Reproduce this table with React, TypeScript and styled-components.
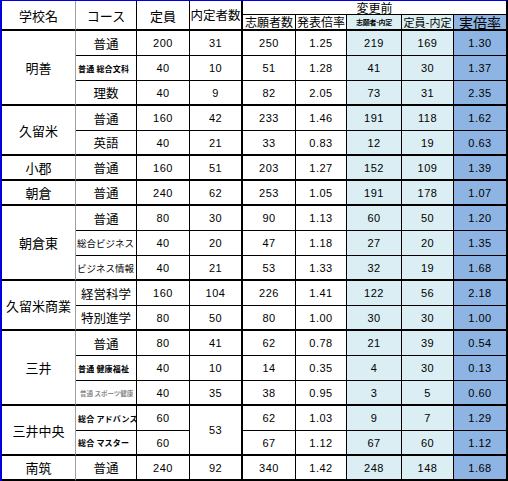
import React, { Fragment } from "react";
import styled, { createGlobalStyle, css } from "styled-components";

type Tone = "plain" | "light" | "blue";
type Edge = "gray" | "thin" | "thick" | "none";
type Kind = "normal" | "small" | "mid" | "faint";

interface Course {
  name: string;
  kind?: Kind;
  cap: number;
  offer?: number;
  offerSpan?: number;
  apply: number;
  rate: string;
  diff: number;
  left: number;
  real: string;
}

interface School {
  name: string;
  rows: Course[];
}

const schools: School[] = [
  {
    name: "明善",
    rows: [
      { name: "普通", cap: 200, offer: 31, apply: 250, rate: "1.25", diff: 219, left: 169, real: "1.30" },
      { name: "普通 総合文科", kind: "small", cap: 40, offer: 10, apply: 51, rate: "1.28", diff: 41, left: 30, real: "1.37" },
      { name: "理数", cap: 40, offer: 9, apply: 82, rate: "2.05", diff: 73, left: 31, real: "2.35" },
    ],
  },
  {
    name: "久留米",
    rows: [
      { name: "普通", cap: 160, offer: 42, apply: 233, rate: "1.46", diff: 191, left: 118, real: "1.62" },
      { name: "英語", cap: 40, offer: 21, apply: 33, rate: "0.83", diff: 12, left: 19, real: "0.63" },
    ],
  },
  {
    name: "小郡",
    rows: [{ name: "普通", cap: 160, offer: 51, apply: 203, rate: "1.27", diff: 152, left: 109, real: "1.39" }],
  },
  {
    name: "朝倉",
    rows: [{ name: "普通", cap: 240, offer: 62, apply: 253, rate: "1.05", diff: 191, left: 178, real: "1.07" }],
  },
  {
    name: "朝倉東",
    rows: [
      { name: "普通", cap: 80, offer: 30, apply: 90, rate: "1.13", diff: 60, left: 50, real: "1.20" },
      { name: "総合ビジネス", kind: "mid", cap: 40, offer: 20, apply: 47, rate: "1.18", diff: 27, left: 20, real: "1.35" },
      { name: "ビジネス情報", kind: "mid", cap: 40, offer: 21, apply: 53, rate: "1.33", diff: 32, left: 19, real: "1.68" },
    ],
  },
  {
    name: "久留米商業",
    rows: [
      { name: "経営科学", cap: 160, offer: 104, apply: 226, rate: "1.41", diff: 122, left: 56, real: "2.18" },
      { name: "特別進学", cap: 80, offer: 50, apply: 80, rate: "1.00", diff: 30, left: 30, real: "1.00" },
    ],
  },
  {
    name: "三井",
    rows: [
      { name: "普通", cap: 80, offer: 41, apply: 62, rate: "0.78", diff: 21, left: 39, real: "0.54" },
      { name: "普通 健康福祉", kind: "small", cap: 40, offer: 10, apply: 14, rate: "0.35", diff: 4, left: 30, real: "0.13" },
      { name: "普通 スポーツ健康", kind: "faint", cap: 40, offer: 35, apply: 38, rate: "0.95", diff: 3, left: 5, real: "0.60" },
    ],
  },
  {
    name: "三井中央",
    rows: [
      { name: "総合 アドバンス", kind: "small", cap: 60, offer: 53, offerSpan: 2, apply: 62, rate: "1.03", diff: 9, left: 7, real: "1.29" },
      { name: "総合 マスター", kind: "small", cap: 60, apply: 67, rate: "1.12", diff: 67, left: 60, real: "1.12" },
    ],
  },
  {
    name: "南筑",
    rows: [{ name: "普通", cap: 240, offer: 92, apply: 340, rate: "1.42", diff: 248, left: 148, real: "1.68" }],
  },
];

const GlobalStyle = createGlobalStyle`
  html, body {
    margin: 0;
    padding: 0;
    background: #ffffff;
  }
  body {
    font-family: "Noto Sans CJK JP", "Noto Sans", sans-serif;
    color: #000000;
  }
`;

const tones: Record<Tone, string> = {
  plain: "#ffffff",
  light: "#daeef3",
  blue: "#8db4e2",
};

const edges: Record<Edge, string> = {
  gray: "1px solid #a0a0a0",
  thin: "1px solid #000000",
  thick: "2px solid #000000",
  none: "none",
};

const Sheet = styled.div`
  display: grid;
  grid-template-columns: 74px 61px 53px 53px 53px 51px 55px 52px 52px;
  grid-template-rows: 14px 16px repeat(18, 25px);
  width: 508px;
  box-sizing: border-box;
  border-top: 1px solid #0000e0;
  border-left: 2px solid #0000e0;
  border-right: 2px solid #000000;
  background: #ffffff;
`;

const cellBase = css<{ $edge?: Edge; $thick?: boolean; $tone?: Tone }>`
  box-sizing: border-box;
  display: flex;
  align-items: center;
  justify-content: center;
  overflow: visible;
  white-space: nowrap;
  background: ${(p) => tones[p.$tone ?? "plain"]};
  border-right: ${(p) => edges[p.$edge ?? "thin"]};
  border-bottom: ${(p) => (p.$thick ? edges.thick : edges.thin)};
`;

const HeadCell = styled.div<{ $edge?: Edge; $thick?: boolean; $tone?: Tone; $rows?: number; $cols?: number; $size?: number; $bold?: boolean }>`
  ${cellBase};
  grid-row: span ${(p) => p.$rows ?? 1};
  grid-column: span ${(p) => p.$cols ?? 1};
  font-size: ${(p) => p.$size ?? 12.5}px;
  font-weight: ${(p) => (p.$bold ? 700 : 400)};
  line-height: 1;
  letter-spacing: ${(p) => ((p.$size ?? 13) < 9 ? "-0.3px" : "0")};
`;

const SchoolCell = styled.div<{ $rows: number }>`
  ${cellBase};
  grid-row: span ${(p) => p.$rows};
  border-right: ${edges.gray};
  border-bottom: ${edges.thick};
  font-size: 13px;
`;

const courseFont: Record<Kind, string> = {
  normal: "font-size: 12.5px; justify-content: center;",
  mid: "font-size: 9.5px; justify-content: flex-start; padding-left: 1px;",
  small: "font-size: 8px; font-weight: 700; letter-spacing: 0.2px; justify-content: flex-start; padding-left: 2px;",
  faint: "font-size: 6.5px; font-weight: 700; color: #8a8a8a; justify-content: flex-start; padding-left: 4px;",
};

const CourseCell = styled.div<{ $thick?: boolean; $kind: Kind }>`
  ${cellBase};
  ${(p) => courseFont[p.$kind]};
`;

const NumCell = styled.div<{ $edge?: Edge; $thick?: boolean; $tone?: Tone; $rows?: number }>`
  ${cellBase};
  grid-row: span ${(p) => p.$rows ?? 1};
  font-family: "Liberation Sans Narrow", "Liberation Sans", sans-serif;
  font-size: 11px;
  letter-spacing: 0.5px;
`;

export default function App() {
  return (
    <>
      <GlobalStyle />
      <Sheet>
        <HeadCell $rows={2} $edge="gray" $thick $size={13}>学校名</HeadCell>
        <HeadCell $rows={2} $thick $size={13}>コース</HeadCell>
        <HeadCell $rows={2} $thick $size={13}>定員</HeadCell>
        <HeadCell $rows={2} $edge="thick" $thick>内定者数</HeadCell>
        <HeadCell $cols={5} $edge="none" $size={12}>変更前</HeadCell>
        <HeadCell $thick $size={12}>志願者数</HeadCell>
        <HeadCell $thick $size={12}>発表倍率</HeadCell>
        <HeadCell $thick $tone="light" $size={7} $bold>志願者-内定</HeadCell>
        <HeadCell $thick $tone="light" $size={11}>定員-内定</HeadCell>
        <HeadCell $thick $tone="blue" $edge="none" $size={14}>実倍率</HeadCell>

        {schools.map((s) =>
          s.rows.map((r, i) => {
            const last = i === s.rows.length - 1;
            const offerEnds = r.offerSpan ? i + r.offerSpan - 1 === s.rows.length - 1 : last;
            return (
              <Fragment key={s.name + r.name}>
                {i === 0 && <SchoolCell $rows={s.rows.length}>{s.name}</SchoolCell>}
                <CourseCell $thick={last} $kind={r.kind ?? "normal"}>{r.name}</CourseCell>
                <NumCell $thick={last}>{r.cap}</NumCell>
                {r.offer !== undefined && (
                  <NumCell $thick={offerEnds} $edge="thick" $rows={r.offerSpan}>{r.offer}</NumCell>
                )}
                <NumCell $thick={last}>{r.apply}</NumCell>
                <NumCell $thick={last}>{r.rate}</NumCell>
                <NumCell $thick={last} $tone="light">{r.diff}</NumCell>
                <NumCell $thick={last} $tone="light">{r.left}</NumCell>
                <NumCell $thick={last} $tone="blue" $edge="none">{r.real}</NumCell>
              </Fragment>
            );
          })
        )}
      </Sheet>
    </>
  );
}
